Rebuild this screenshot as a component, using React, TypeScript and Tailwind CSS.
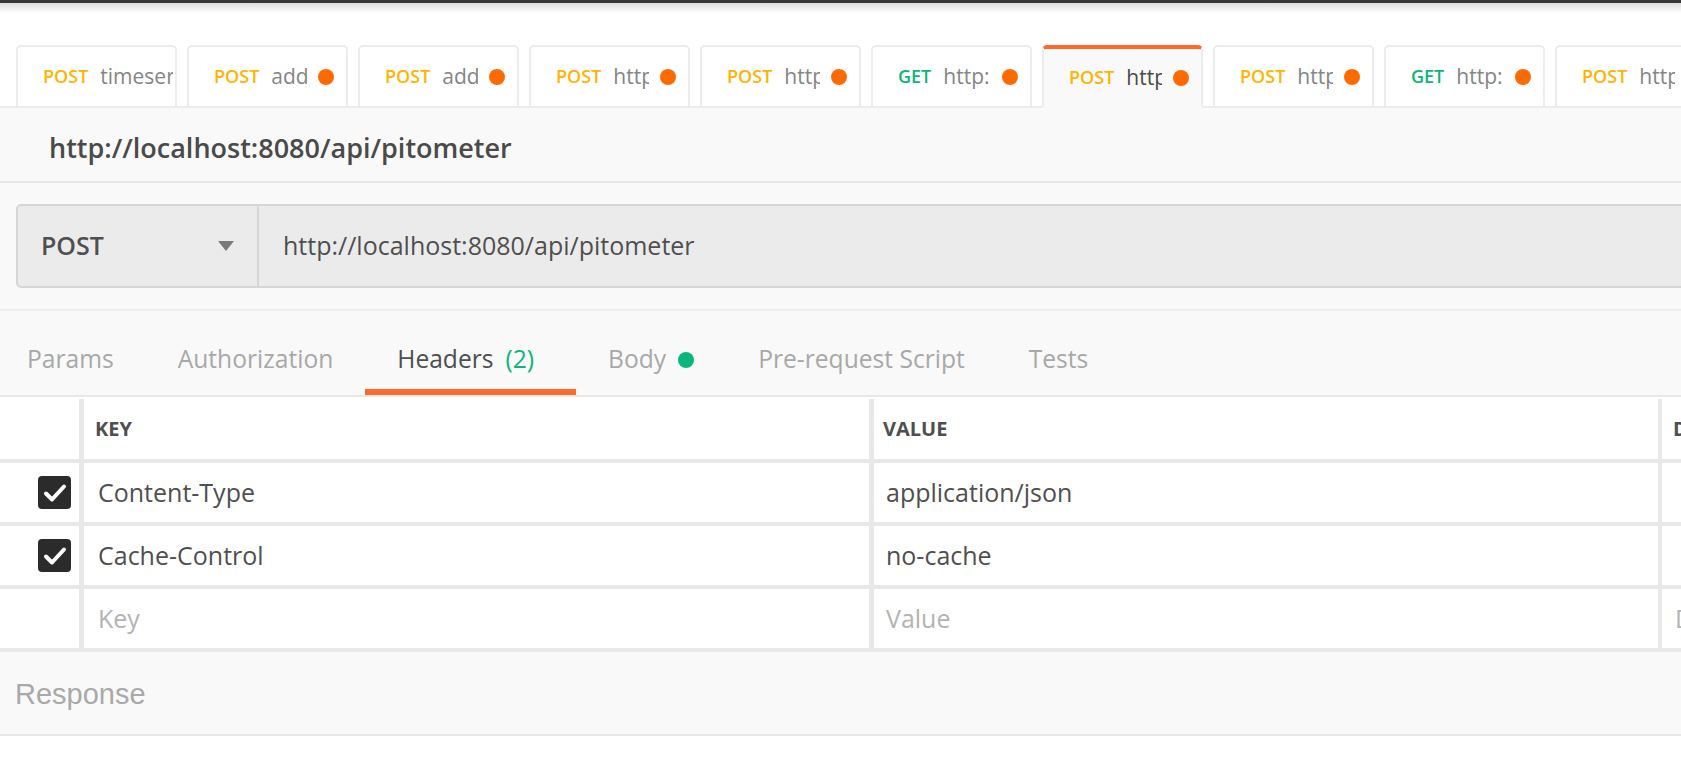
import React from "react";

type Tab = { method: "POST" | "GET"; name: string; dirty: boolean; active?: boolean };

const tabs: Tab[] = [
  { method: "POST", name: "timeseries", dirty: false },
  { method: "POST", name: "addMeasure", dirty: true },
  { method: "POST", name: "addMeasure", dirty: true },
  { method: "POST", name: "http://localhost", dirty: true },
  { method: "POST", name: "http://localhost", dirty: true },
  { method: "GET", name: "http:", dirty: true },
  { method: "POST", name: "http://localhost", dirty: true, active: true },
  { method: "POST", name: "http://localhost", dirty: true },
  { method: "GET", name: "http:", dirty: true },
  { method: "POST", name: "http://localhost", dirty: true },
];

const font = "font-['Open_Sans','Liberation_Sans',sans-serif]";

function RequestTab({ tab }: { tab: Tab }) {
  return (
    <div
      className={
        "-mb-[2px] flex h-[63px] w-[161px] shrink-0 items-center rounded-t-[5px] border-2 pl-[25px] " +
        (tab.dirty ? "pr-[12px] " : "pr-[2px] ") +
        (tab.active
          ? "border-[#ececec] border-t-[4px] border-t-[#ff6a2a] border-b-[#f9f9f9] bg-[#f9f9f9]"
          : "border-[#ececec] bg-white")
      }
    >
      <span
        className={
          "shrink-0 text-[18px] font-semibold " +
          (tab.method === "GET" ? "text-[#0cb57b]" : "text-[#ffb400]")
        }
      >
        {tab.method}
      </span>
      <span
        className={
          "ml-[12px] min-w-0 flex-1 overflow-hidden whitespace-nowrap text-[21px] " +
          (tab.active ? "text-[#4a4a4a]" : "text-[#858585]")
        }
      >
        {tab.name}
      </span>
      {tab.dirty && <span className="ml-[11px] h-[16px] w-[16px] shrink-0 rounded-full bg-[#ff6a00]" />}
    </div>
  );
}

function Check() {
  return (
    <div className="flex h-[33px] w-[33px] items-center justify-center rounded-[4px] bg-[#2b2b2b]">
      <svg width="26" height="26" viewBox="0 0 26 26" fill="none">
        <polyline
          points="4,13.5 10,19.5 22,6.5"
          stroke="white"
          strokeWidth="4"
          strokeLinecap="round"
          strokeLinejoin="round"
        />
      </svg>
    </div>
  );
}

const rows = [
  { key: "Content-Type", value: "application/json", checked: true },
  { key: "Cache-Control", value: "no-cache", checked: true },
];

export default function App() {
  const subTabs = [
    { label: "Params", cls: "pl-[27px] pr-8" },
    { label: "Authorization", cls: "px-8" },
    { label: "Headers", cls: "pl-8 pr-[42px]", active: true },
    { label: "Body", cls: "px-8", dot: true },
    { label: "Pre-request Script", cls: "px-8" },
    { label: "Tests", cls: "px-8" },
  ];

  return (
    <div className={"h-[777px] w-full overflow-hidden bg-white text-[#4f4f4f] " + font}>
      {/* window edge */}
      <div className="h-[3px] bg-[#383838]" />
      <div className="h-[10px] bg-linear-to-b from-[#dcdcdc] to-white" />

      {/* open request tabs */}
      <div className="flex items-end gap-[10px] border-b-2 border-[#ececec] pl-[16px] pt-[32px]">
        {tabs.map((t, i) => (
          <RequestTab key={i} tab={t} />
        ))}
      </div>

      {/* request title */}
      <div className="flex h-[75px] items-center border-b-2 border-[#e8e8e8] bg-[#f9f9f9] pl-[49px] pt-[8px]">
        <span className="text-[27px] font-semibold text-[#4a4a4a]">http://localhost:8080/api/pitometer</span>
      </div>

      {/* url bar */}
      <div className="border-b-2 border-[#ececec] bg-[#f9f9f9] py-[21px] pl-[16px]">
        <div className="-mr-[10px] flex h-[84px] rounded-[5px] border-2 border-[#d6d6d6] bg-[#ebebeb]">
          <div className="flex w-[241px] shrink-0 items-center justify-between border-r-2 border-[#d6d6d6] pl-[23px] pr-[23px]">
            <span className="text-[25px] font-semibold text-[#4f4f4f]">POST</span>
            <svg width="16" height="10" viewBox="0 0 16 10">
              <polygon points="0,0 16,0 8,10" fill="#7a7a7a" />
            </svg>
          </div>
          <div className="flex items-center pl-[24px] text-[25px] text-[#4f4f4f]">
            http://localhost:8080/api/pitometer
          </div>
        </div>
      </div>

      {/* request sections */}
      <div className="flex h-[84px] bg-[#f9f9f9]">
        {subTabs.map((s) => (
          <div
            key={s.label}
            className={
              "flex items-center border-b-[6px] pt-[19px] text-[24.6px] " +
              s.cls +
              (s.active ? " border-[#ff6a2a] text-[#4f4f4f]" : " border-transparent text-[#a8a8a8]")
            }
          >
            <span>{s.label}</span>
            {s.active && <span className="ml-[12px] text-[#0cb57b]">(2)</span>}
            {s.dot && <span className="ml-[12px] h-[16px] w-[16px] rounded-full bg-[#0cb57b]" />}
          </div>
        ))}
      </div>

      {/* headers table */}
      <div className="border-t-2 border-[#e8e8e8] bg-white">
        <div className="flex h-[66px] border-b-4 border-[#e8e8e8] pt-[2px] text-[20px] font-bold text-[#4f4f4f]">
          <div className="w-[79px] shrink-0" />
          <div className="flex w-[790px] shrink-0 items-center border-l-[5px] border-[#e8e8e8] pl-[11px]">KEY</div>
          <div className="flex w-[789px] shrink-0 items-center border-l-[5px] border-[#e8e8e8] pl-[9px]">VALUE</div>
          <div className="flex flex-1 items-center overflow-hidden whitespace-nowrap border-l-4 border-[#e8e8e8] pl-[11px]">
            DESCRIPTION
          </div>
        </div>
        {rows.map((r) => (
          <div key={r.key} className="flex h-[63px] border-b-4 border-[#e8e8e8] text-[25px] text-[#4f4f4f]">
            <div className="flex w-[79px] shrink-0 items-center justify-end pr-[8px]">{r.checked && <Check />}</div>
            <div className="flex w-[790px] shrink-0 items-center border-l-[5px] border-[#e8e8e8] pl-[14px]">{r.key}</div>
            <div className="flex w-[789px] shrink-0 items-center border-l-[5px] border-[#e8e8e8] pl-[12px]">{r.value}</div>
            <div className="flex-1 border-l-4 border-[#e8e8e8]" />
          </div>
        ))}
        <div className="flex h-[63px] border-b-4 border-[#e8e8e8] text-[25px] text-[#b3b3b3]">
          <div className="w-[79px] shrink-0" />
          <div className="flex w-[790px] shrink-0 items-center border-l-[5px] border-[#e8e8e8] pl-[14px]">Key</div>
          <div className="flex w-[789px] shrink-0 items-center border-l-[5px] border-[#e8e8e8] pl-[12px]">Value</div>
          <div className="flex flex-1 items-center overflow-hidden whitespace-nowrap border-l-4 border-[#e8e8e8] pl-[13px]">
            Description
          </div>
        </div>
      </div>

      {/* response */}
      <div className="flex h-[84px] items-center border-b-2 border-[#e8e8e8] bg-[#f9f9f9] pl-[15px] pt-[4px]">
        <span className="font-['Liberation_Sans',Arial,sans-serif] text-[29px] text-[#a9a9a9]">Response</span>
      </div>
    </div>
  );
}
